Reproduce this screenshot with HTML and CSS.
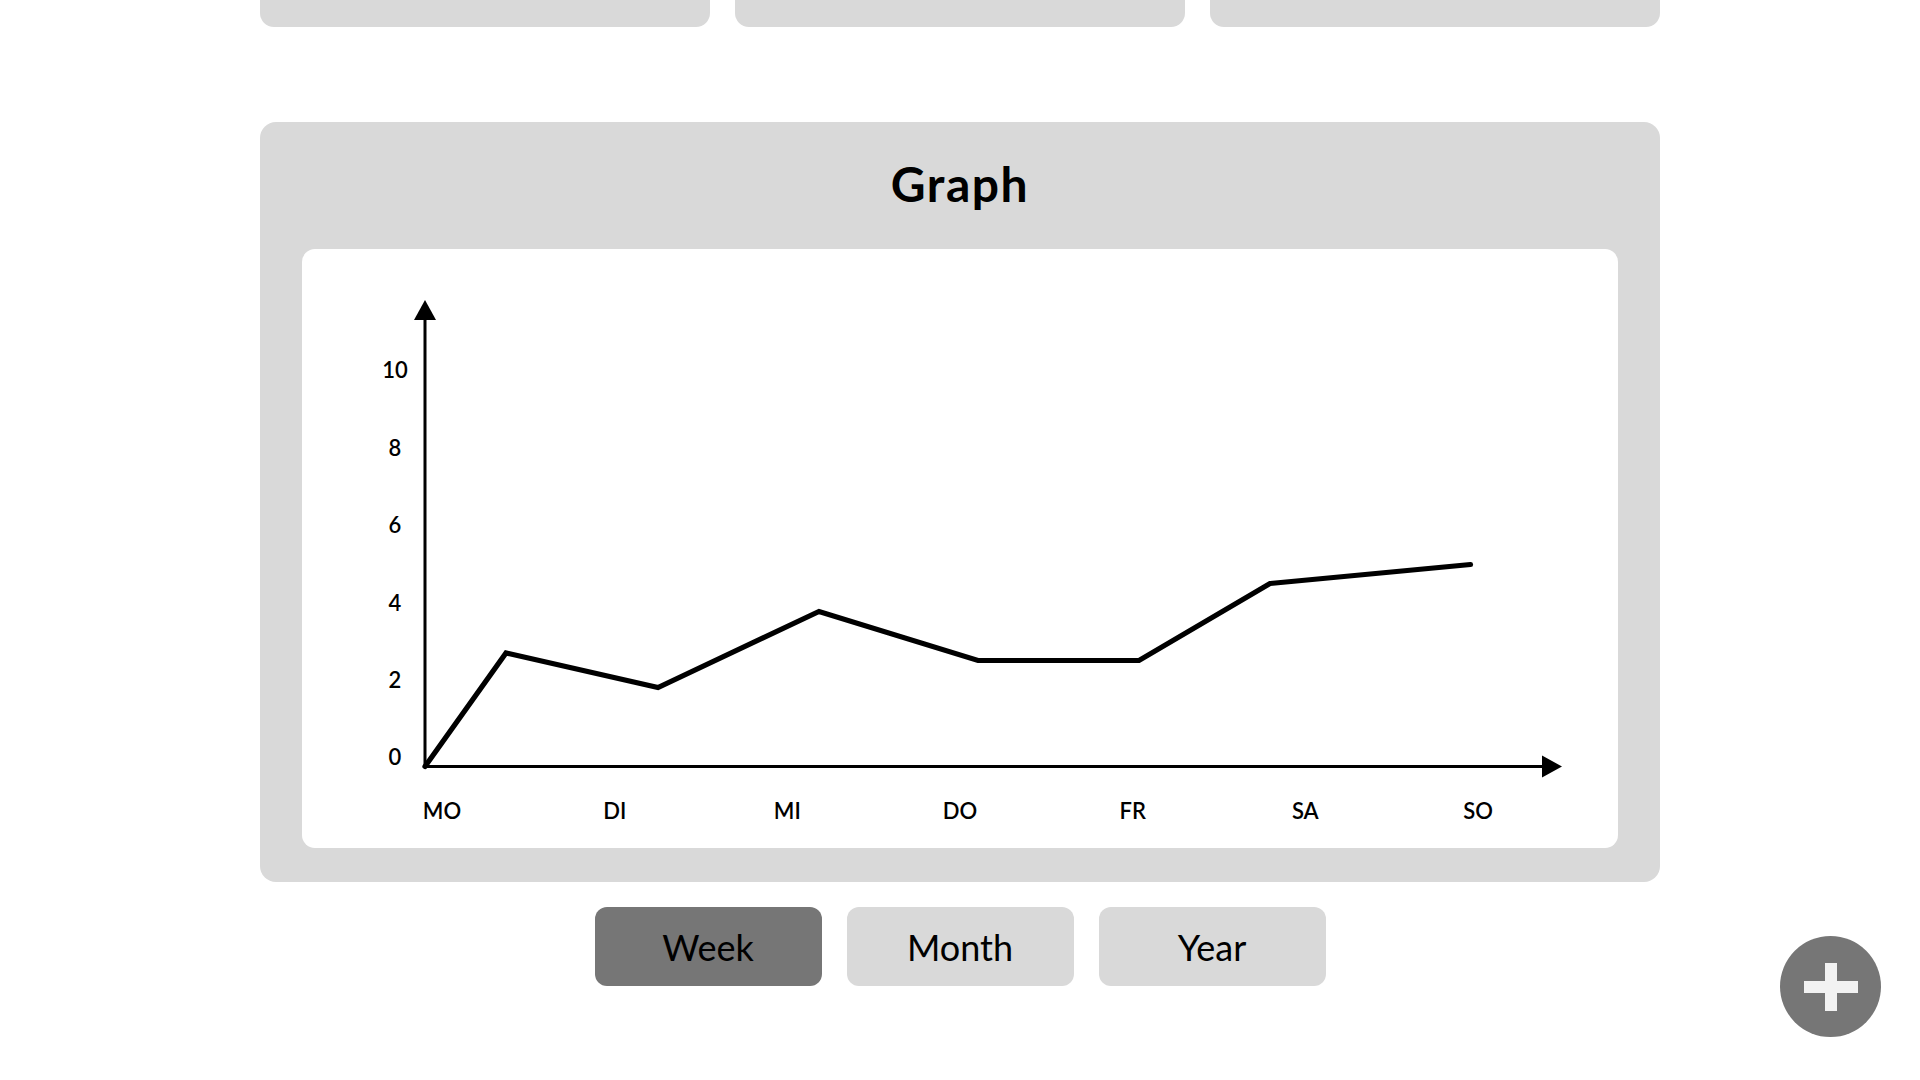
FILE: index.html
```html
<!DOCTYPE html>
<html lang="de">
<head>
<meta charset="utf-8">
<title>Graph</title>
<link rel="stylesheet" href="styles.css">
</head>
<body>
<main class="page">
  <div class="stats">
    <div class="stat-card"></div>
    <div class="stat-card"></div>
    <div class="stat-card"></div>
  </div>

  <section class="graph-card">
    <h2 class="graph-title">Graph</h2>
    <div class="chart">
      <svg class="chart-svg" width="1316" height="599" viewBox="0 0 1316 599">
        <g class="axes">
          <line x1="123" y1="70" x2="123" y2="519"/>
          <line x1="121.5" y1="517.5" x2="1241" y2="517.5"/>
        </g>
        <polygon class="arrow" points="112,71 134,71 123,51"/>
        <polygon class="arrow" points="1240,506.5 1240,528.5 1260,517.5"/>
        <polyline class="data" points="123,517.5 204,404 356,438.5 517,362.5 676,411.5 837,411.5 968,334.5 1168.5,315.5"/>
        <g class="y-labels">
          <text x="93" y="129">10</text>
          <text x="93" y="207">8</text>
          <text x="93" y="284">6</text>
          <text x="93" y="361.5">4</text>
          <text x="93" y="439">2</text>
          <text x="93" y="516">0</text>
        </g>
        <g class="x-labels">
          <text x="140" y="569.5">MO</text>
          <text x="312.7" y="569.5">DI</text>
          <text x="485.3" y="569.5">MI</text>
          <text x="658" y="569.5">DO</text>
          <text x="830.7" y="569.5">FR</text>
          <text x="1003.3" y="569.5">SA</text>
          <text x="1176" y="569.5">SO</text>
        </g>
      </svg>
    </div>
  </section>

  <div class="range-tabs">
    <button class="tab tab-active">Week</button>
    <button class="tab">Month</button>
    <button class="tab">Year</button>
  </div>
</main>

<button class="fab" aria-label="Hinzufügen">
  <svg width="54" height="48" viewBox="0 0 54 48">
    <rect x="0" y="18" width="54" height="12" fill="#f2f2f2"/>
    <rect x="21" y="0" width="12" height="48" fill="#f2f2f2"/>
  </svg>
</button>
</body>
</html>
```

FILE: styles.css
```css
* {
  box-sizing: border-box;
}

html, body {
  margin: 0;
  padding: 0;
  background: #ffffff;
}

body {
  font-family: Lato, "Noto Sans", "Liberation Sans", sans-serif;
  color: #000;
  width: 1920px;
  height: 1080px;
  overflow: hidden;
}

.page {
  width: 1400px;
  margin: 0 auto;
  display: flex;
  flex-direction: column;
}

.stats {
  display: grid;
  grid-template-columns: repeat(3, 1fr);
  gap: 25px;
  height: 27px;
}

.stat-card {
  background: #d9d9d9;
  border-radius: 0 0 14px 14px;
}

.graph-card {
  margin-top: 95px;
  background: #d9d9d9;
  border-radius: 16px;
  padding: 34px 42px 34px;
  display: flex;
  flex-direction: column;
}

.graph-title {
  margin: 0;
  font-size: 48px;
  line-height: 56px;
  font-weight: 700;
  text-align: center;
  letter-spacing: 1.5px;
}

.chart {
  margin-top: 37px;
  background: #ffffff;
  border-radius: 13px;
  height: 599px;
}

.chart-svg {
  display: block;
}

.axes line {
  stroke: #000;
  stroke-width: 3;
}

.arrow {
  fill: #000;
}

.data {
  fill: none;
  stroke: #000;
  stroke-width: 5.2;
  stroke-linecap: round;
  stroke-linejoin: miter;
}

.y-labels text,
.x-labels text {
  font-family: Lato, "Noto Sans", sans-serif;
  font-size: 22px;
  font-weight: 600;
  fill: #000;
  text-anchor: middle;
}

.range-tabs {
  margin-top: 25px;
  display: flex;
  justify-content: center;
  gap: 25px;
}

.tab {
  width: 227px;
  height: 79px;
  border: none;
  border-radius: 12px;
  background: #d9d9d9;
  font-family: Lato, "Noto Sans", sans-serif;
  font-size: 36px;
  font-weight: 400;
  color: #000;
  display: flex;
  align-items: center;
  justify-content: center;
  padding: 0;
}

.tab-active {
  background: #767676;
}

.fab {
  position: fixed;
  right: 39px;
  bottom: 43px;
  width: 101px;
  height: 101px;
  border-radius: 50%;
  border: none;
  background: #767676;
  padding: 0;
  display: flex;
  align-items: center;
  justify-content: center;
}

.fab svg {
  display: block;
}
```
